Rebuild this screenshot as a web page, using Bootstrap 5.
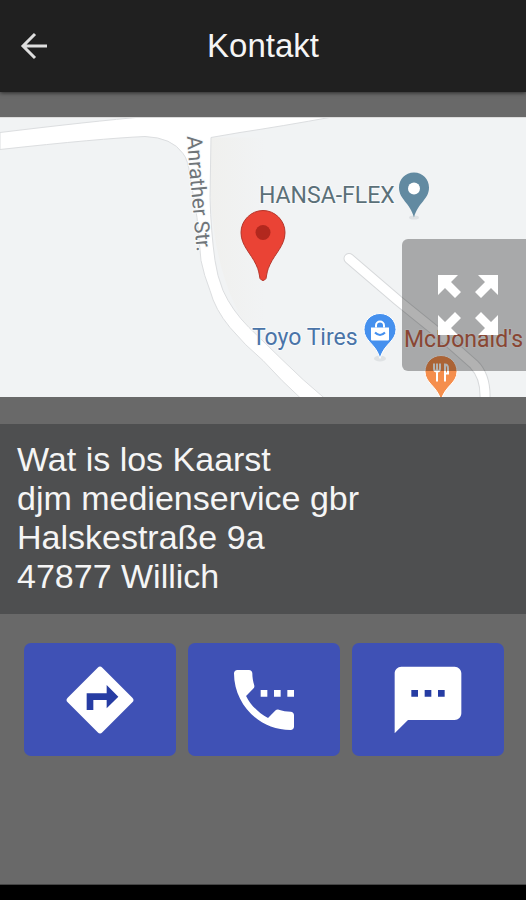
<!DOCTYPE html>
<html lang="de">
<head>
<meta charset="utf-8">
<meta name="viewport" content="width=device-width, initial-scale=1">
<title>Kontakt</title>
<link href="https://cdn.jsdelivr.net/npm/bootstrap@5.3.0/dist/css/bootstrap.min.css" rel="stylesheet">
<style>
body { background: #696969; font-family: "Liberation Sans", Arial, sans-serif; }
.app-header { background: #202020; min-height: 92px; box-shadow: 0 1px 4px rgba(0, 0, 0, .6); }
.app-header h1 { font-size: 33px; line-height: 40px; color: #f5f5f5; }
.back-btn, .header-spacer { width: 68px; }
.back-btn { color: #dedede; }
.app-main { padding-top: 25px; }
.map-canvas { height: 280px; background: #f1f3f4; border-top: 1px solid #dcdcdc; }
.map-label { font-family: Roboto, sans-serif; font-size: 23px; paint-order: stroke; stroke: #f8fafb; stroke-width: 2px; }
.expand-btn { right: 0; bottom: 26px; width: 124px; height: 132px; background: rgba(0, 0, 0, .3); border-radius: 6px 0 0 6px; color: #fff; }
.address-box { background: #4e4f50; color: #f5f5f5; margin-top: 27px; padding: 16px 17px 18px; font-size: 34px; line-height: 39px; }
.contact-actions { padding: 29px 22px 29px 24px; gap: 12px; }
.action-btn { background: #3f51b5; color: #fff; height: 113px; border-radius: 7px; }
.action-btn:hover { background: #35459c; color: #fff; }
.system-bar { height: 16px; background: #000; border-top: 1px solid #444; }
</style>
<script src="https://cdn.jsdelivr.net/npm/bootstrap@5.3.0/dist/js/bootstrap.bundle.min.js"></script>
</head>
<body class="d-flex flex-column min-vh-100">
<header class="app-header d-flex align-items-center position-relative">
  <button type="button" class="back-btn btn border-0 p-0" aria-label="Zurück">
    <svg class="d-block mx-auto" width="28" height="28" viewBox="0 0 28 28" fill="none" stroke="currentColor" stroke-width="3" aria-hidden="true"><path d="M27 14H3M15 2 3 14l12 12"/></svg>
  </button>
  <h1 class="flex-grow-1 text-center mb-0 fw-normal">Kontakt</h1>
  <div class="header-spacer"></div>
</header>

<main class="app-main flex-grow-1">
  <section class="position-relative" aria-label="Karte">
    <svg class="map-canvas d-block w-100" viewBox="0 0 526 280" preserveAspectRatio="xMaxYMid slice" role="img" aria-label="Anrather Str.">
      <defs>
        <path id="street" d="M187 19Q190 65 198 145"/>
        <linearGradient id="verge"><stop offset="0" stop-color="#f0f0ee"/><stop offset=".4" stop-color="#f1f3f4"/></linearGradient>
      </defs>
      <path d="M210 20h60v130q8 72 80 130h-28C250 232 205 180 210 20z" fill="url(#verge)"/>
      <path d="M0 15Q90 4 147-1H335Q280 9 240 15L211 20L210 80Q211 115 215 143Q217 158 223 173Q232 193 249 210L283 243Q302 262 326 282H302Q282 264 263 243Q245 228 230 210T210 173Q204 158 201 143L197 100 190 58Q188 42 183 36Q172 20 145 19Q100 21 0 32z" fill="#fff" stroke="#dcdee0"/>
      <path d="M349 141 398 183 440 217 474 247Q486 259 485 282" fill="none" stroke="#d7d9db" stroke-width="11" stroke-linecap="round"/>
      <path d="M349 141 398 183 440 217 474 247Q486 259 485 282" fill="none" stroke="#fff" stroke-width="9" stroke-linecap="round"/>
      <g class="map-label">
        <text fill="#707579" font-size="21"><textPath href="#street">Anrather Str.</textPath></text>
        <text x="259" y="85" fill="#5b7078">HANSA-FLEX</text>
        <text x="252" y="227" fill="#4a74a8">Toyo Tires</text>
        <text x="404" y="229" fill="#c5654a">McDonald's</text>
      </g>
      <path d="M263 93c-12 0-22 10-22 22 0 13 10 21 15 32 3 6 3 9 4 14q3 4 6 0c1-5 1-8 4-14 5-11 15-19 15-32 0-12-10-22-22-22z" fill="#ea4335" stroke="#b5352a"/>
      <circle cx="263" cy="115" r="7.500" fill="#b2281e"/>
      <ellipse cx="414" cy="100" rx="5" ry="2" fill="#dfe2e4"/>
      <path d="M414 55c-9 0-15 7-15 15 0 12 11 15 15 30 4-15 15-18 15-30 0-8-6-15-15-15z" fill="#628aa1"/>
      <circle cx="414" cy="71" r="6" fill="#fff"/>
      <ellipse cx="380" cy="241" rx="6" ry="3" fill="#dfe2e4"/>
      <path d="M380 196c-9 0-16 7-16 16 0 12 12 14 16 29 4-15 16-17 16-29 0-9-7-16-16-16z" fill="#4590ee" stroke="#fff"/>
      <path d="M371 210h18v12q0 1-1 1h-16q-1 0-1-1z" fill="#fff"/>
      <path d="M376 210v-2a4 4 0 0 1 8 0v2" fill="none" stroke="#fff" stroke-width="2"/>
      <path d="M375 215q5 5 10 0" fill="none" stroke="#4590ee" stroke-width="2"/>
      <path d="M441 238c-9 0-16 7-16 16 0 12 12 14 16 29 4-15 16-17 16-29 0-9-7-16-16-16z" fill="#f58e4d" stroke="#fff"/>
      <path d="M434 246v5q0 3 3 3t3-3v-5M437 246v18M445 264v-17q3 0 3 4v5h-2" fill="none" stroke="#fff" stroke-width="2"/>
    </svg>
    <button type="button" class="expand-btn btn position-absolute border-0 d-flex align-items-center justify-content-center p-0" aria-label="Karte vergrößern">
      <svg class="ms-2" width="80" height="80" viewBox="0 0 24 24" fill="currentColor" aria-hidden="true"><path d="M15 3l2.100 2.100-3 3 1.800 1.800 3-3L21 9V3zM3 9l2.100-2.100 3 3 1.800-1.800-3-3L9 3H3zm6 12-2.100-2.100 3-3-1.800-1.800-3 3L3 15v6zm12-6-2.100 2.100-3-3-1.800 1.800 3 3L15 21h6z"/></svg>
    </button>
  </section>

  <address class="address-box mb-0">Wat is los Kaarst<br>djm medienservice gbr<br>Halskestraße 9a<br>47877 Willich</address>

  <nav class="contact-actions d-flex" aria-label="Kontaktmöglichkeiten">
    <button type="button" class="action-btn btn border-0 p-0 flex-fill" aria-label="Route">
      <svg width="80" height="80" viewBox="0 0 24 24" aria-hidden="true"><path fill="currentColor" d="M21.710 11.290l-9-9a1 1 0 0 0-1.410 0l-9 9a1 1 0 0 0 0 1.410l9 9a1 1 0 0 0 1.410 0l9-9a1 1 0 0 0 0-1.410z"/><path fill="#263ca3" d="M14 14.500V12h-4v3H8v-5h6V7.500l3.500 3.500z"/></svg>
    </button>
    <button type="button" class="action-btn btn border-0 p-0 flex-fill" aria-label="Anrufen">
      <svg width="80" height="80" viewBox="0 0 24 24" fill="currentColor" aria-hidden="true"><path d="M11 9h2v2h-2V9zm4 0h2v2h-2V9zm5 6.500c-1.250 0-2.450-.2-3.570-.57-.35-.11-.74-.03-1.020.24l-2.200 2.200c-2.830-1.440-5.150-3.750-6.590-6.590l2.200-2.210c.28-.26.36-.65.25-1C8.700 6.450 8.500 5.250 8.500 4c0-.55-.45-1-1-1H4c-.55 0-1 .45-1 1 0 9.390 7.610 17 17 17 .55 0 1-.45 1-1v-3.500c0-.55-.45-1-1-1zM19 9v2h2V9h-2z"/></svg>
    </button>
    <button type="button" class="action-btn btn border-0 p-0 flex-fill" aria-label="Nachricht">
      <svg width="80" height="80" viewBox="0 0 24 24" aria-hidden="true"><path fill="currentColor" d="M20 2H4c-1.100 0-2 .9-2 2v18l4-4h14c1.100 0 2-.9 2-2V4c0-1.100-.9-2-2-2z"/><path fill="#263ca3" d="M7 9h2v2H7zM11 9h2v2h-2zM15 9h2v2h-2z"/></svg>
    </button>
  </nav>
</main>
<footer class="system-bar"></footer>
</body>
</html>
